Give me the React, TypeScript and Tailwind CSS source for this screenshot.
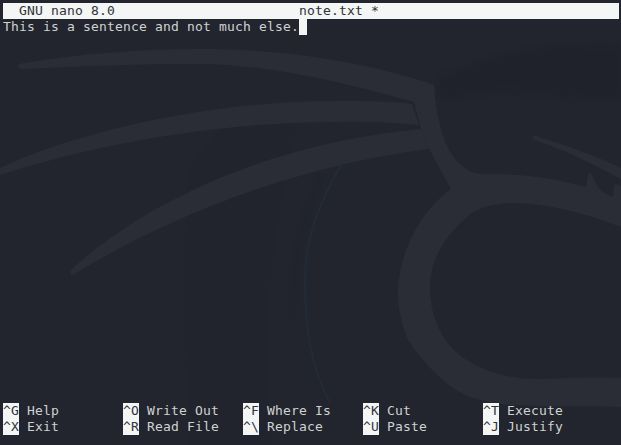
const BLADE = "#2a2d35";

function Wallpaper() {
  return (
    <svg className="absolute inset-0" width="621" height="445" viewBox="0 0 621 445">
      <path d="M190 170C186 230 184 300 190 445L270 445C262 350 262 260 300 110L235 120C215 135 200 150 190 170Z" fill="#20232b" opacity="0.35" className="blur-[1px]" />
      <path d="M342 163C318 205 305 240 305 280C305 325 310 365 330 403" fill="none" stroke="#232b39" strokeWidth="2" />
      <path d="M322 175C300 220 292 270 293 320" fill="none" stroke="#20232b" strokeWidth="6" opacity="0.5" className="blur-[1px]" />
      <path d="M440 78C480 60 540 40 621 44L621 100C590 100 500 85 440 100Z" fill="#1f222b" opacity="0.75" className="blur-[3px]" />
      <g fill={BLADE}>
        <path d="M18 66C18 64 20 64 24 63C80 54 140 49 198 49C290 49 370 63 434 85C435 100 437 115 440 125C446 150 456 164 470 171C477 174 482 174 490 174C525 174 555 178 586 187C587 180 588 173 590 173C592 173 594 181 598 187C602 192 608 195 613 197C613 190 614 185 616 184L621 186L621 227C590 215 550 203 511 203C490 204 478 208 467 217C445 236 430 260 430 287C430 320 445 347 467 360C490 375 515 379 540 379C570 378 600 377 621 378L621 407C590 406 545 407 510 405C490 403 478 400 463 394C445 385 425 365 408 340C402 325 398 310 398 293C398 260 415 215 451 189L429 149L421 129L414 102C350 84 270 64 198 64C140 64 80 66 24 69C20 69 18 68 18 66Z" />
        <path d="M412 104L419 125C390 122 365 121 337 122C220 122 100 143 0 175L0 168C70 135 200 101 337 101C365 101 390 101 412 104Z" />
        <path d="M421 129L429 149C300 165 170 215 73 275C71 276 70 272 71 270C130 215 250 145 421 129Z" />
        <path d="M533 136C536 135 538 137 545 139C575 148 600 158 621 168L621 179C595 165 565 150 535 140C532 139 532 137 533 136Z" />
      </g>
    </svg>
  );
}

function Shortcut({ k, label }: { k: string; label: string }) {
  return (
    <div className="flex h-4">
      <span className="w-4 bg-[#f4f5f5] text-[#2f3238]">{k}</span>
      <span className="ml-2">{label}</span>
    </div>
  );
}

const TOP = [
  ["^G", "Help"],
  ["^O", "Write Out"],
  ["^F", "Where Is"],
  ["^K", "Cut"],
  ["^T", "Execute"],
];
const BOTTOM = [
  ["^X", "Exit"],
  ["^R", "Read File"],
  ["^\\", "Replace"],
  ["^U", "Paste"],
  ["^J", "Justify"],
];

export default function App() {
  return (
    <div className="relative w-[621px] h-[445px] overflow-hidden bg-[#22252d] text-[#d0d1d3] font-['DejaVu_Sans_Mono',monospace] text-[13px] tracking-[0.17px] leading-4 whitespace-pre">
      <Wallpaper />
      <div className="relative flex flex-col h-full pt-[3px] pb-[10px] pl-[3px] pr-[2px]">
        <div className="flex h-4 bg-[#f4f5f5] text-[#2f3238]">
          <span className="w-[296px] pl-4">GNU nano 8.0</span>
          <span>note.txt *</span>
        </div>
        <div className="flex h-4">
          <span>This is a sentence and not much else.</span>
          <span className="w-2 bg-[#f4f5f5]" />
        </div>
        <div className="mt-auto grid grid-cols-[repeat(5,120px)]">
          {TOP.map(([k, l]) => <Shortcut key={k} k={k} label={l} />)}
          {BOTTOM.map(([k, l]) => <Shortcut key={k} k={k} label={l} />)}
        </div>
      </div>
    </div>
  );
}
